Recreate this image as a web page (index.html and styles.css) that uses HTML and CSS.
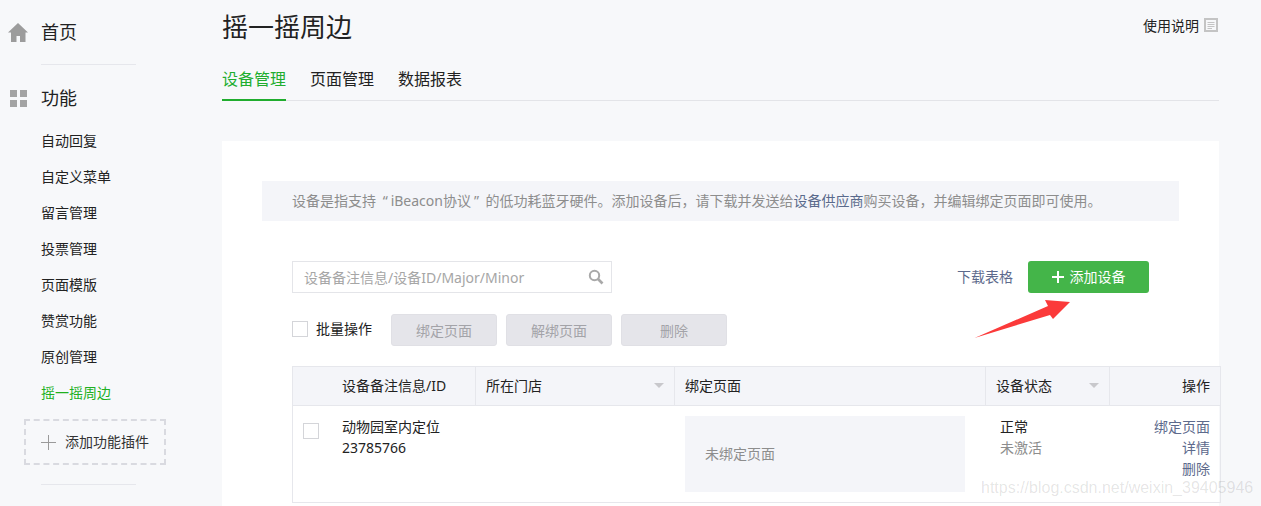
FILE: index.html
```html
<!DOCTYPE html>
<html lang="zh-CN">
<head>
<meta charset="utf-8">
<title>摇一摇周边</title>
<link rel="stylesheet" href="styles.css">
</head>
<body>
<div class="page">
  <aside class="side">
    <a class="side-head side-home">
      <svg class="side-icon" width="22" height="20" viewBox="0 0 22 20"><path d="M11 0 L21 9.500 H18.500 V19 H13 V13 H9.500 V19 H4 V9.500 H1 Z" fill="#9c9c9c"/></svg>
      <span>首页</span>
    </a>
    <div class="side-rule"></div>
    <a class="side-head side-func">
      <svg class="side-icon" width="22" height="20" viewBox="0 0 22 20"><g fill="#a3a3a3"><rect x="3" y="1" width="7" height="7"/><rect x="13" y="1" width="7" height="7"/><rect x="3" y="11" width="7" height="7"/><rect x="13" y="11" width="7" height="7"/></g></svg>
      <span>功能</span>
    </a>
    <nav class="side-list">
      <a>自动回复</a>
      <a>自定义菜单</a>
      <a>留言管理</a>
      <a>投票管理</a>
      <a>页面模版</a>
      <a>赞赏功能</a>
      <a>原创管理</a>
      <a class="on">摇一摇周边</a>
    </nav>
    <div class="add-plugin">
      <svg width="15" height="15" viewBox="0 0 15 15"><path d="M7.500 0 V15 M0 7.500 H15" stroke="#9a9a9a" stroke-width="1"/></svg>
      <span>添加功能插件</span>
    </div>
    <div class="side-rule side-rule-low"></div>
  </aside>

  <main class="main">
    <header class="top">
      <h1>摇一摇周边</h1>
      <a class="help">使用说明
        <svg width="14" height="14" viewBox="0 0 14 14"><rect x="1" y="1" width="12" height="12" fill="#f7f8fa" stroke="#c4c4c4" stroke-width="2"/><path d="M3.500 4.500 H10.500 M3.500 6.500 H10.500 M3.500 8.500 H10.500 M3.500 10.500 H8" stroke="#c4c4c4"/></svg>
      </a>
    </header>
    <div class="tabs">
      <a class="tab on">设备管理</a>
      <a class="tab">页面管理</a>
      <a class="tab">数据报表</a>
    </div>

    <section class="card">
      <p class="notice">设备是指支持 <span class="quote">“</span>iBeacon协议<span class="quote">”</span> 的低功耗蓝牙硬件。添加设备后，请下载并发送给<a>设备供应商</a>购买设备，并编辑绑定页面即可使用。</p>

      <div class="tools">
        <div class="search">
          <span>设备备注信息/设备ID/Major/Minor</span>
          <svg width="16" height="16" viewBox="0 0 16 16"><circle cx="6.500" cy="6.500" r="4.700" fill="none" stroke="#a9a9a9" stroke-width="2"/><path d="M10 10 L14.500 14.500" stroke="#a9a9a9" stroke-width="2.600"/></svg>
        </div>
        <a class="download">下载表格</a>
        <a class="add-btn"><svg width="12" height="12" viewBox="0 0 12 12"><path d="M6 0 V12 M0 6 H12" stroke="#fff" stroke-width="2"/></svg><span>添加设备</span></a>
      </div>

      <div class="batch">
        <label class="batch-label"><i class="check"></i><span>批量操作</span></label>
        <div class="batch-btns">
          <button class="gray">绑定页面</button>
          <button class="gray">解绑页面</button>
          <button class="gray">删除</button>
        </div>
      </div>

      <div class="table">
        <div class="th th-name">设备备注信息/ID</div>
        <div class="th th-sort">所在门店<i class="caret"></i></div>
        <div class="th">绑定页面</div>
        <div class="th th-sort">设备状态<i class="caret"></i></div>
        <div class="th th-op">操作</div>

        <div class="td td-name">
          <i class="check check-row"></i>
          <div>
            <div>动物园室内定位</div>
            <div>23785766</div>
          </div>
        </div>
        <div class="td"></div>
        <div class="td td-page"><div class="unbound">未绑定页面</div></div>
        <div class="td td-state">
          <div>正常</div>
          <div class="muted">未激活</div>
        </div>
        <div class="td td-op">
          <a>绑定页面</a>
          <a>详情</a>
          <a>删除</a>
        </div>
      </div>
    </section>
  </main>
</div>

<svg class="arrow" width="100" height="48" viewBox="0 0 100 48"><path d="M0.500 45 L74 13 L71 7 L96 9 L79 26 L76 22 Z" fill="#fb3a3a"/></svg>
<div class="watermark">https://blog.csdn.net/weixin_39405946</div>
</body>
</html>
```

FILE: styles.css
```css
* { box-sizing: border-box; }
html, body { margin: 0; padding: 0; height: 506px; overflow: hidden; }
body {
  position: relative;
  background: #f7f8fa;
  color: #222;
  font-family: "Noto Sans", "Noto Sans CJK SC", sans-serif;
  font-size: 14px;
}
a { color: inherit; text-decoration: none; }
.page { display: flex; align-items: flex-start; height: 506px; overflow: hidden; }

.side { width: 222px; flex: none; padding-top: 20px; }
.side-head { display: flex; align-items: center; height: 25px; font-size: 18px; line-height: 25px; color: #222; }
.side-icon { margin-left: 7px; margin-right: 12px; flex: none; }
.side-rule { width: 95px; height: 1px; margin-left: 41px; background: #e6e7ec; }
.side-home + .side-rule { margin-top: 19px; }
.side-func { margin-top: 21px; }
.side-list { display: flex; flex-direction: column; padding-left: 41px; margin-top: 12px; }
.side-list a { height: 36px; line-height: 35px; font-size: 14px; }
.side-list a.on { color: #20b01e; }
.add-plugin {
  display: flex;
  align-items: center;
  gap: 9px;
  width: 142px;
  height: 46px;
  margin: 8px 0 0 24px;
  padding-left: 15px;
  border: 2px dashed #d9dae0;
  font-size: 14px;
  color: #333;
}
.add-plugin span { margin-bottom: 3px; }
.side-rule-low { margin-top: 19px; }

.main { width: 997px; flex: none; }
.top { display: flex; justify-content: space-between; height: 53px; }
h1 { margin: 8px 0 0; font-size: 26px; line-height: 38px; font-weight: 400; color: #222; }
.help { display: flex; align-items: center; gap: 5px; height: 20px; margin: 15px 1px 0 0; font-size: 14px; color: #222; }
.tabs { display: flex; gap: 24px; height: 48px; border-bottom: 1px solid #e3e4e8; }
.tab { height: 48px; padding-top: 13px; font-size: 16px; line-height: 26px; color: #222; }
.tab.on { color: #20ad2e; border-bottom: 2px solid #20ad2e; }

.card { height: 400px; margin-top: 40px; padding: 40px; background: #fff; }
.notice {
  height: 40px;
  margin: 0;
  padding-left: 30px;
  background: #f4f5f9;
  font-size: 14px;
  line-height: 39px;
  color: #8d8d8d;
  white-space: nowrap;
}
.notice a { color: #5a6a8c; }
.quote { display: inline-block; width: 11px; text-align: center; }

.tools { display: flex; align-items: center; height: 32px; margin: 40px 30px 0; }
.search {
  display: flex;
  align-items: center;
  justify-content: space-between;
  width: 320px;
  height: 32px;
  padding: 0 7px 0 11px;
  border: 1px solid #e4e5e9;
  font-size: 14px;
  color: #a6a6a6;
}
.download { margin: 0 15px 2px auto; font-size: 14px; color: #5d6a8c; }
.add-btn {
  display: flex;
  align-items: center;
  justify-content: center;
  gap: 6px;
  width: 121px;
  height: 32px;
  border-radius: 3px;
  background: #44b549;
  color: #fff;
  font-size: 14px;
}
.add-btn span { margin-bottom: 2px; }

.batch { display: flex; align-items: center; height: 32px; margin: 21px 30px 0; }
.batch-label { display: flex; align-items: center; gap: 8px; width: 99px; padding-bottom: 2px; font-size: 14px; color: #222; }
.batch-label span { margin-bottom: 2px; }
.check { display: block; flex: none; width: 16px; height: 16px; background: #fff; border: 1px solid #d4d5d9; }
.batch-btns { display: flex; gap: 9px; }
.gray {
  width: 106px;
  height: 32px;
  padding: 0;
  border: 1px solid #e0e0e5;
  border-radius: 3px;
  background: #e5e5ea;
  color: #a3a3a8;
  font: 14px "Noto Sans", "Noto Sans CJK SC", sans-serif;
}

.table {
  display: grid;
  grid-template-columns: 182px 199px 311px 124px 111px;
  grid-template-rows: 39px 97px;
  width: 929px;
  margin: 20px 0 0 30px;
  border-left: 1px solid #e6e7ec;
  border-right: 1px solid #e6e7ec;
  border-top: 1px solid #e6e7ec;
  font-size: 14px;
}
.th {
  display: flex;
  align-items: center;
  justify-content: space-between;
  padding: 0 10px 3px;
  background: #f4f5f9;
  border-bottom: 1px solid #e6e7ec;
  border-left: 1px solid #e6e7ec;
  color: #222;
}
.th-name { padding-left: 49px; border-left: 0; }
.th-op { justify-content: flex-end; }
.caret { width: 0; height: 0; margin-top: 2px; border: 5px solid transparent; border-top: 5px solid #c8c8cc; border-bottom: 0; }
.td { border-bottom: 1px solid #e6e7ec; }
.td-name { display: flex; padding: 10px 0 0 10px; line-height: 21px; color: #222; }
.check-row { margin: 7px 23px 0 0; }
.td-page { padding: 10px 20px 0 11px; }
.unbound {
  display: flex;
  align-items: center;
  height: 76px;
  padding: 0 0 2px 20px;
  background: #f4f5f9;
  color: #8d8d8d;
}
.td-state { padding: 10px 0 0 15px; line-height: 21px; color: #222; }
.muted { color: #8d8d8d; }
.td-op { display: flex; flex-direction: column; align-items: flex-end; padding: 10px 10px 0 0; line-height: 21px; color: #5d6a8c; }

.arrow { position: absolute; left: 974px; top: 293px; }
.watermark {
  position: absolute;
  left: 981px;
  top: 478px;
  font-family: "Liberation Sans", sans-serif;
  font-size: 16px;
  line-height: 20px;
  color: rgba(0, 0, 0, 0.11);
  white-space: nowrap;
}
```
